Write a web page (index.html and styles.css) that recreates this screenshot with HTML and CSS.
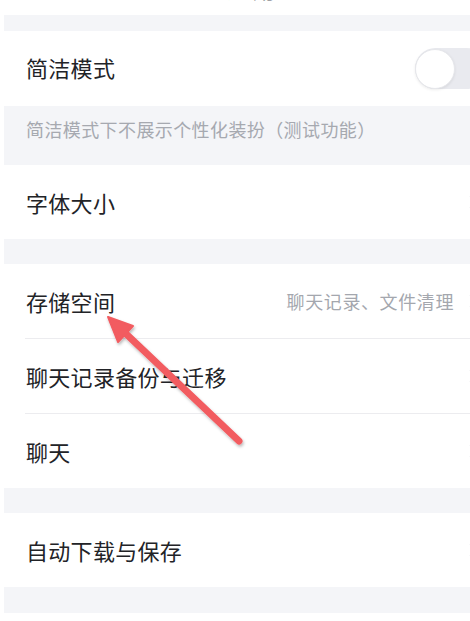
FILE: index.html
```html
<!DOCTYPE html>
<html lang="zh-CN">
<head>
<meta charset="utf-8">
<title>通用设置</title>
<link rel="stylesheet" href="styles.css">
</head>
<body>
<div class="page">
  <div class="header">
    <div class="header-inner">
      <span class="back">返回</span>
      <span class="title">通用</span>
    </div>
  </div>
  <div class="gap gap-top"></div>

  <div class="item">
    <div class="item-inner first">
      <span class="label">简洁模式</span>
      <span class="toggle"><span class="knob"></span></span>
    </div>
  </div>
  <div class="caption">简洁模式下不展示个性化装扮（测试功能）</div>

  <div class="item">
    <div class="item-inner">
      <span class="label">字体大小</span>
      <svg class="chev" viewBox="0 0 8 14"><path d="M1 1l6 6-6 6" /></svg>
    </div>
  </div>
  <div class="gap"></div>

  <div class="item">
    <div class="item-inner sep">
      <span class="label">存储空间</span>
      <span class="value">聊天记录、文件清理</span>
      <svg class="chev" viewBox="0 0 8 14"><path d="M1 1l6 6-6 6" /></svg>
    </div>
  </div>
  <div class="item">
    <div class="item-inner sep">
      <span class="label">聊天记录备份与迁移</span>
      <svg class="chev" viewBox="0 0 8 14"><path d="M1 1l6 6-6 6" /></svg>
    </div>
  </div>
  <div class="item">
    <div class="item-inner">
      <span class="label">聊天</span>
      <svg class="chev" viewBox="0 0 8 14"><path d="M1 1l6 6-6 6" /></svg>
    </div>
  </div>
  <div class="gap"></div>

  <div class="item">
    <div class="item-inner">
      <span class="label">自动下载与保存</span>
      <svg class="chev" viewBox="0 0 8 14"><path d="M1 1l6 6-6 6" /></svg>
    </div>
  </div>
  <div class="gap gap-bottom"></div>
</div>

<svg class="arrow" viewBox="0 0 470 621" width="470" height="621">
  <defs>
    <filter id="sh" x="-20%" y="-20%" width="140%" height="140%">
      <feDropShadow dx="1" dy="2" stdDeviation="1.6" flood-color="#000" flood-opacity="0.28"/>
    </filter>
  </defs>
  <g filter="url(#sh)" fill="#f25b60" stroke="#f25b60">
    <line x1="239" y1="441" x2="122" y2="330" stroke-width="7" stroke-linecap="round"/>
    <polygon points="108,317 133,326 118,342" stroke-width="2" stroke-linejoin="round"/>
  </g>
</svg>
</body>
</html>
```

FILE: styles.css
```css
html, body {
  margin: 0;
  padding: 0;
  background: #ffffff;
}
body {
  width: 470px;
  height: 621px;
  overflow: hidden;
  position: relative;
  font-family: "Noto Sans CJK SC", "Noto Sans", sans-serif;
  color: #222327;
}
.page {
  margin-left: 4px;
  width: 466px;
}
.header {
  height: 15px;
  overflow: hidden;
}
.header-inner {
  display: flex;
  margin-top: -24px;
  height: 24px;
  line-height: 24px;
  font-size: 22px;
  color: #55575c;
}
.back {
  margin-left: 24px;
  width: 17px;
  overflow: hidden;
  white-space: nowrap;
}
.title {
  margin-left: 182px;
  letter-spacing: 4px;
}
.gap {
  height: 25px;
  background: #f4f5f8;
}
.gap-top {
  height: 16px;
}
.gap-bottom {
  height: 26px;
}
.item {
  padding-left: 22px;
  background: #fff;
  overflow: hidden;
}
.item-inner {
  height: 74px;
  display: flex;
  align-items: center;
}
.item-inner.first {
  height: 75px;
  padding-bottom: 4px;
  box-sizing: border-box;
}
.item-inner.sep {
  border-bottom: 1px solid #ececef;
  margin-left: -1px;
  padding-left: 1px;
}
.label {
  font-size: 22px;
  line-height: 30px;
  letter-spacing: 0.3px;
  flex: 1;
  white-space: nowrap;
}
.value {
  font-size: 18px;
  line-height: 26px;
  color: #a4a7ae;
  letter-spacing: 0.6px;
  white-space: nowrap;
}
.chev {
  width: 8px;
  height: 14px;
  margin-left: 15px;
  margin-right: -7px;
  flex: none;
  fill: none;
  stroke: #e2e3e6;
  stroke-width: 1.4;
}
.toggle {
  width: 72px;
  height: 41px;
  border-radius: 21px;
  background: #e9eaef;
  margin-right: -17px;
  margin-top: 4px;
  display: flex;
  align-items: center;
  flex: none;
}
.knob {
  width: 38px;
  height: 38px;
  border-radius: 50%;
  background: #ffffff;
  border: 1px solid #e6e7eb;
  box-shadow: 0 1px 3px rgba(0, 0, 0, 0.08);
}
.caption {
  height: 54px;
  padding-top: 5px;
  padding-left: 22px;
  line-height: 36px;
  font-size: 18px;
  letter-spacing: 0.4px;
  color: #a6a9b0;
  background: #f4f5f8;
  white-space: nowrap;
}
.arrow {
  position: absolute;
  left: 0;
  top: 0;
  pointer-events: none;
}
```
